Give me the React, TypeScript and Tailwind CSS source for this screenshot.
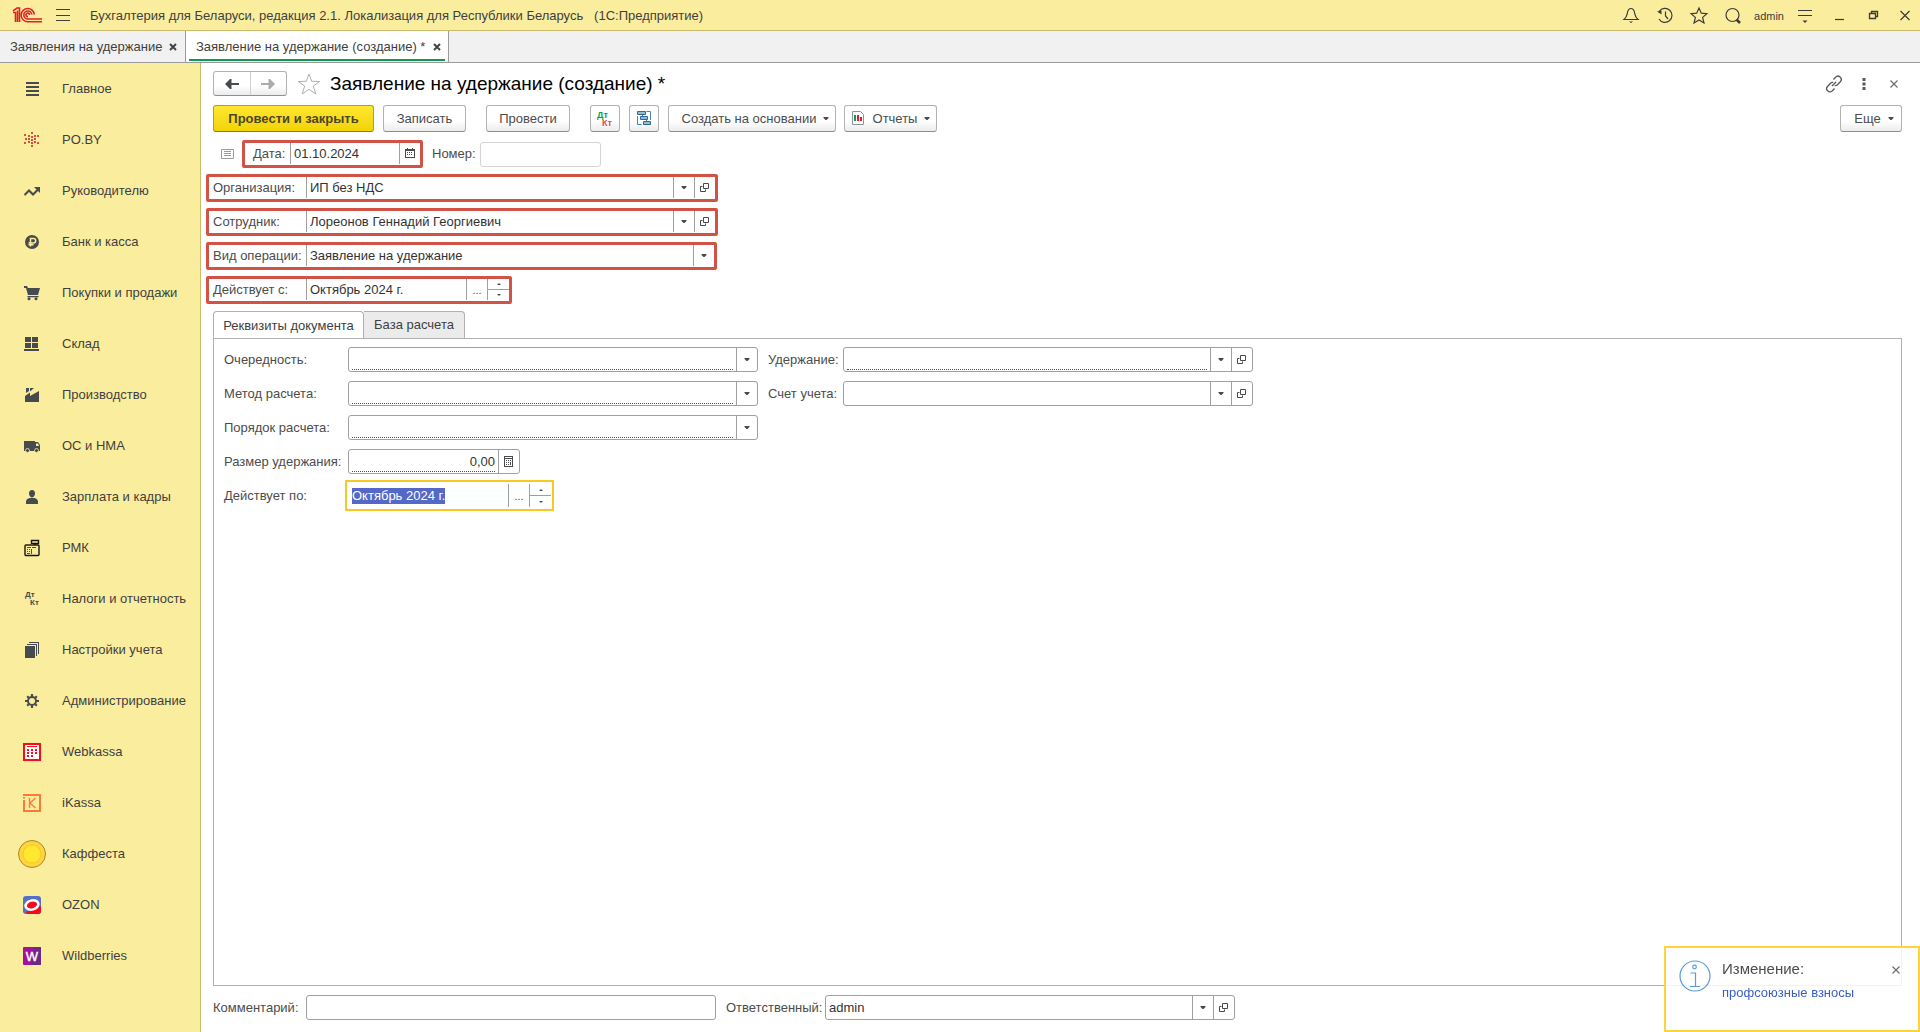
import { useEffect, useRef, type ReactNode } from 'react'
import { clsx } from 'clsx'

export default function App() {
  return (
    <div className="flex min-h-screen flex-col bg-white font-['Liberation_Sans',Arial,sans-serif] text-[13px] leading-4 text-[#3f3f3f]">
      <TitleBar />
      <WindowTabs />
      <div className="flex flex-1">
        <Sidebar />
        <DocumentForm />
      </div>
      <Notification />
    </div>
  )
}

function TitleBar() {
  return (
    <header className="flex h-[31px] items-center border-b border-[#c9bb6b] bg-[#fbed9e] pl-3">
      <Logo />
      <button aria-label="Меню" className="ml-3">
        <svg width="16" height="14" viewBox="0 0 16 14" stroke="#3f3f3f" fill="none">
          <path d="M1 1.5h14M1 7.5h14M1 12.5h14" />
        </svg>
      </button>
      <h1 className="ml-[19px] pt-px whitespace-pre">
        Бухгалтерия для Беларуси, редакция 2.1. Локализация для Республики Беларусь{'   '}(1С:Предприятие)
      </h1>
      <div className="ml-auto flex items-center text-[#3b3b3b]">
        <TitleButton label="Уведомления">
          <path d="M4 14.5h14c-3-2.500-3-4.500-3.500-7C14 4.500 12.500 3.500 11 3.500S8 4.500 7.500 7.500c-.5 2.500-.5 4.500-3.500 7z" />
          <path d="M9 16.500h4l-2 1.500z" fill="currentColor" stroke="none" />
        </TitleButton>
        <TitleButton label="История">
          <path d="M5.200 6.500A7 7 0 1 1 5 14M11.500 6.500V11l2.500 3" />
          <path d="M3 6.500l4.500-1v4z" fill="currentColor" stroke="none" />
        </TitleButton>
        <TitleButton label="Избранное">
          <path d="M11 3l2.300 5.200 5.600.5-4.300 3.700 1.400 5.600-5-3-5 3 1.400-5.600-4.300-3.700 5.600-.5z" />
        </TitleButton>
        <TitleButton label="Поиск">
          <circle cx="10.500" cy="10" r="6.500" />
          <path d="M14.500 14.500l3.500 3.500" strokeWidth="2.500" />
        </TitleButton>
        <button className="mx-1 pt-px text-[11px]">admin</button>
        <TitleButton label="Сервис">
          <path d="M4 5.500h14M4 10.500h14" />
          <path d="M8.500 15.500h5L11 18z" fill="currentColor" stroke="none" />
        </TitleButton>
        <TitleButton label="Свернуть">
          <path d="M7 14.500h9" />
        </TitleButton>
        <TitleButton label="Восстановить">
          <path d="M7.500 8.500h6v5h-6zM9.500 8V6.500h6v5H14" strokeWidth="1.300" />
        </TitleButton>
        <TitleButton label="Закрыть" className="w-[30px]">
          <path d="M6.500 6l9 9M15.500 6l-9 9" />
        </TitleButton>
      </div>
    </header>
  )
}

interface TitleButtonProps {
  label: string
  className?: string
  children: ReactNode
}

function TitleButton({ label, className = 'w-[34px]', children }: TitleButtonProps) {
  return (
    <button aria-label={label} className={clsx('flex justify-center', className)}>
      <svg width="22" height="20" viewBox="0 0 22 20" fill="none" stroke="currentColor" strokeWidth="1.200">
        {children}
      </svg>
    </button>
  )
}

function Logo() {
  return (
    <svg width="31" height="16" viewBox="0 0 31 16" fill="none" stroke="#e31e24" strokeWidth="1.600" aria-label="1С">
      <path d="M1 5.500h2.500V15M1 3.800L5 1h2.500v14M5.500 3.500V15" />
      <path d="M22.300 7.500A6.600 6.600 0 1 0 16 14.700h14M19.800 7.500A4 4 0 1 0 16 12h14" />
      <path d="M17.500 8A1.800 1.800 0 1 0 16 9.600" />
    </svg>
  )
}

function WindowTabs() {
  return (
    <nav className="flex h-8 border-b border-[#9b9b9b] bg-[#f1f1f1]">
      <div className="flex w-[185px] items-center justify-between pr-2 pl-[10px]">
        <a href="#list">Заявления на удержание</a>
        <TabClose />
      </div>
      <div className="flex w-[264px] flex-col border-x border-[#9b9b9b] bg-white px-[3px] pb-px">
        <div className="flex flex-1 items-center justify-between pt-1 pr-1 pl-[7px]">
          <a href="#create">Заявление на удержание (создание) *</a>
          <TabClose />
        </div>
        <div className="h-[2px] bg-[#0f9b4e]" />
      </div>
    </nav>
  )
}

function TabClose() {
  return (
    <button aria-label="Закрыть вкладку">
      <svg width="8" height="8" viewBox="0 0 8 8" stroke="#3f4548" strokeWidth="2">
        <path d="M1 1l6 6M7 1L1 7" />
      </svg>
    </button>
  )
}

const sections: { title: string; icon: ReactNode }[] = [
  { title: 'Главное', icon: <path d="M4 3h13v2H4zM4 7h13v2H4zM4 11h13v2H4zM4 15h13v2H4z" /> },
  {
    title: 'PO.BY',
    icon: (
      <path
        fill="#d9503f"
        d="M9 2h2v2H9zM9 6h2v2H9zM9 9h2v2H9zM9 12h2v2H9zM9 15h2v2H9zM6 5h2v2H6zM12 5h2v2h-2zM6 8h2v2H6zM12 8h2v2h-2zM6 11h2v2H6zM12 11h2v2h-2zM2 4h2v2H2zM15 5h2v2h-2zM3 8h2v2H3zM2 12h2v2H2zM15 12h2v2h-2z"
      />
    ),
  },
  { title: 'Руководителю', icon: <path d="M2 13l5-5 4 4 3.500-3.500L12 6h6v6l-2-2-5 5-4-4-4 4z" /> },
  {
    title: 'Банк и касса',
    icon: (
      <>
        <circle cx="10" cy="10" r="7" />
        <path d="M8.500 14.500v-8h3a2.200 2.200 0 0 1 0 4.400H6.500M6.500 12.800h5" fill="none" stroke="#fbed9e" strokeWidth="1.500" />
      </>
    ),
  },
  {
    title: 'Покупки и продажи',
    icon: (
      <>
        <path d="M2 3h3l1 2h12l-2 7H6L4 5H2zM5.500 13h11v1.200h-11z" />
        <circle cx="7" cy="15.800" r="1.500" />
        <circle cx="14" cy="15.800" r="1.500" />
      </>
    ),
  },
  { title: 'Склад', icon: <path d="M3 3h6v5H3zM10 3h6v5h-6zM3 9h6v5H3zM10 9h6v5h-6zM2 15h15v2H2z" /> },
  { title: 'Производство', icon: <path d="M3 17v-6l5-3.500V11l9-5v11zM4 3h3v3L4 8zM8 3h4L8 6.500z" /> },
  {
    title: 'ОС и НМА',
    icon: (
      <>
        <path d="M2 5h11v10H2zM12.500 6h3.500l2 3v6h-5.500z" />
        <path d="M14 7.500h2l1 2.500h-3z" fill="#fbed9e" />
        <circle cx="5.500" cy="14.500" r="2" stroke="#fbed9e" strokeWidth=".8" />
        <circle cx="14.500" cy="14.500" r="2" stroke="#fbed9e" strokeWidth=".8" />
      </>
    ),
  },
  { title: 'Зарплата и кадры', icon: <path d="M10 3c2 0 3 1.400 3 3.500S11.500 10.500 10 10.500 7 8.600 7 6.500 8 3 10 3zM4 17v-2.500c0-2 2.500-3.500 4-3.500h4c1.500 0 4 1.500 4 3.500V17z" /> },
  {
    title: 'РМК',
    icon: (
      <>
        <rect x="3" y="7" width="14" height="10.500" rx="1" fill="none" stroke="#1a1410" strokeWidth="1.400" />
        <path d="M9.500 2.500h7v3h-7zM13 5.500V7" fill="none" stroke="#1a1410" strokeWidth="1.400" />
        <path d="M4 6h7v2H4zM5 9h4v1H5zM5 11h1v1H5zM7 11h1v1H7zM5 13h1v1H5zM7 13h1v1H7zM10 9h4v1h-4zM5 15h3v1H5zM9 11h1v5H9z" fill="#5b4f35" />
      </>
    ),
  },
  {
    title: 'Налоги и отчетность',
    icon: (
      <g fontSize="8" fontWeight="bold">
        <text x="3" y="8">Дт</text>
        <text x="8" y="16">Кт</text>
      </g>
    ),
  },
  { title: 'Настройки учета', icon: <path d="M3 6h10v12H3zM5 4h10v12h-1V5H5zM7 2h10v12h-1V3H7z" /> },
  {
    title: 'Администрирование',
    icon: (
      <g fill="none" stroke="#484b4d">
        <circle cx="10" cy="10" r="4" strokeWidth="2" />
        <path strokeWidth="2.200" d="M10 3v2.500M10 14.500V17M3 10h2.500M14.500 10H17M5.200 5.200l1.500 1.500M13.300 13.300l1.500 1.500M5.200 14.800l1.500-1.500M13.300 6.700l1.500-1.500" />
      </g>
    ),
  },
  {
    title: 'Webkassa',
    icon: (
      <>
        <rect x="2" y="2" width="16" height="16" fill="#fff" stroke="#fb0d1b" strokeWidth="2" />
        <path d="M5 4h10v1H5zM5 7h2v2H5zM9 7h2v2H9zM13 7h2v2h-2zM5 10h2v2H5zM9 10h2v2H9zM13 10h2v2h-2zM5 13h2v2H5zM9 13h2v2H9z" fill="#fb0d1b" />
      </>
    ),
  },
  {
    title: 'iKassa',
    icon: (
      <g fill="none" stroke="#f97b3c">
        <path strokeWidth="2" d="M1 2h17v16H2V7M2 5.500V4" />
        <path strokeWidth="1.400" d="M7.500 5v10M13.500 5L8 10l5.500 5" />
      </g>
    ),
  },
  {
    title: 'Каффеста',
    icon: (
      <>
        <circle cx="10" cy="10" r="13.500" fill="#fed443" stroke="#a98a1c" />
        <circle cx="10" cy="10" r="9" fill="#ffe930" stroke="#fbc91d" />
      </>
    ),
  },
  {
    title: 'OZON',
    icon: (
      <>
        <rect x="1" y="1" width="18" height="18" rx="3" fill="#5570cb" />
        <path d="M4 17l15-6v5a3 3 0 0 1-3 3H5z" fill="#f5091f" />
        <ellipse cx="10" cy="10" rx="6.500" ry="4.500" fill="#f5091f" stroke="#fff" strokeWidth="2.500" transform="rotate(-15 10 10)" />
      </>
    ),
  },
  {
    title: 'Wildberries',
    icon: (
      <>
        <rect x="1" y="1" width="18" height="18" rx="1" fill="#a3109c" />
        <path d="M13 1h5a1 1 0 0 1 1 1v16a1 1 0 0 1-1 1h-9z" fill="#6a2a86" />
        <text x="10" y="14.500" fontSize="13" textAnchor="middle" fill="#fff" stroke="#fff" strokeWidth=".4">W</text>
      </>
    ),
  },
]

function Sidebar() {
  return (
    <nav className="w-[201px] shrink-0 border-r border-[#c9bb6b] bg-[#fbed9e]">
      {sections.map(({ title, icon }) => (
        <a key={title} href="#section" className="flex h-[51px] items-center pt-px pl-[22px]">
          <svg width="20" height="20" viewBox="0 0 20 20" fill="#484b4d" className="overflow-visible">
            {icon}
          </svg>
          <span className="ml-5 whitespace-nowrap">{title}</span>
        </a>
      ))}
    </nav>
  )
}

function DocumentForm() {
  return (
    <main className="flex min-w-0 flex-1 flex-col pt-2 pr-[18px] pb-3 pl-3 text-[#4c4c4c]">
      <FormHeader />
      <Toolbar />
      <HeaderFields />
      <div className="mt-[7px] flex text-[#3f3f3f]" role="tablist">
        <button role="tab" aria-selected="true" className="-mb-px h-7 w-[151px] rounded-t-sm border border-b-0 border-[#b0b0b0] bg-white whitespace-nowrap">
          Реквизиты документа
        </button>
        <button role="tab" aria-selected="false" className="h-[27px] w-[101px] rounded-tr-sm border border-b-0 border-l-0 border-[#b0b0b0] bg-[#ebebeb] whitespace-nowrap">
          База расчета
        </button>
      </div>
      <DetailsPanel />
      <div className="mt-[9px] flex items-center">
        <label htmlFor="comment" className="w-[93px]">Комментарий:</label>
        <Field className="w-[410px]">
          <TextInput id="comment" />
        </Field>
        <label htmlFor="responsible" className="ml-[10px] w-[99px]">Ответственный:</label>
        <Field className="w-[410px]">
          <TextInput id="responsible" value="admin" />
          <DropButton />
          <OpenButton />
        </Field>
      </div>
    </main>
  )
}

function FormHeader() {
  return (
    <div className="flex h-[25px] items-center">
      <div className="flex h-[25px] w-[74px] rounded-[3px] border border-[#b3b3b3] border-b-[#8f8f8f] bg-linear-to-b from-white from-60% to-[#ececec]">
        <button aria-label="Назад" className="flex flex-1 items-center justify-center border-r border-[#cfcfcf]">
          <ArrowIcon className="text-[#484b4d]" />
        </button>
        <button aria-label="Вперед" className="flex flex-1 items-center justify-center">
          <ArrowIcon className="rotate-180 text-[#ababab]" />
        </button>
      </div>
      <button aria-label="В избранное" className="ml-[10px]">
        <svg width="24" height="24" viewBox="0 0 24 24" fill="none" stroke="#b0b0b0">
          <path d="M12 2l2.700 7.300 8 .2-6.400 4.600L18.800 22 12 17.300 5.200 22l2.500-7.900L1.300 9.500l8-.2z" />
        </svg>
      </button>
      <h2 className="ml-[9px] text-[19px] leading-6 text-black">Заявление на удержание (создание) *</h2>
      <div className="-mr-[7px] ml-auto flex items-center text-[#55595c]">
        <button aria-label="Ссылка" className="w-[30px]">
          <svg width="18" height="18" viewBox="0 0 18 18" fill="none" stroke="currentColor" strokeWidth="1.300" className="mx-auto">
            <path d="M8.500 4.500l2-2.200a3.200 3.200 0 0 1 5 4.200l-3 3.300c-.8.8-1.800 1-2.800.8M9.500 13.500l-2 2.200a3.200 3.200 0 0 1-5-4.200l3-3.300c.8-.8 1.800-1 2.800-.8M7 11l4-4" />
          </svg>
        </button>
        <button aria-label="Дополнительно" className="w-[30px]">
          <svg width="4" height="12" viewBox="0 0 4 12" fill="currentColor" className="mx-auto">
            <path d="M.5 0h3v3h-3zM.5 4.500h3v3h-3zM.5 9h3v3h-3z" />
          </svg>
        </button>
        <button aria-label="Закрыть" className="w-[30px]">
          <CloseIcon />
        </button>
      </div>
    </div>
  )
}

function ArrowIcon({ className }: { className: string }) {
  return (
    <svg width="14" height="10" viewBox="0 0 14 10" fill="currentColor" className={className}>
      <path d="M0 5l5-5h1.500v4H14v2H6.500v4H5z" />
    </svg>
  )
}

function CloseIcon() {
  return (
    <svg width="8" height="8" viewBox="0 0 8 8" stroke="#6b6f72" strokeWidth="1.200" className="mx-auto">
      <path d="M.5.5l7 7M7.500.5l-7 7" />
    </svg>
  )
}

function Toolbar() {
  return (
    <div className="mt-[9px] flex h-[27px]">
      <button className="w-[161px] rounded-[3px] border border-[#b5a116] border-b-[#8a7a10] bg-linear-to-b from-[#ffe62e] to-[#f2d400] font-bold text-[#4c4628]">
        Провести и закрыть
      </button>
      <ToolButton className="ml-[9px] w-[83px]">Записать</ToolButton>
      <ToolButton className="ml-5 w-[84px]">Провести</ToolButton>
      <ToolButton className="ml-5 w-[30px]" label="Движения документа">
        <svg width="18" height="17" viewBox="0 0 18 17" fontSize="9" fontWeight="bold">
          <text x="1" y="8" fill="#0f9b4e">Дт</text>
          <text x="6" y="16" fill="#d9503f">Кт</text>
        </svg>
      </ToolButton>
      <ToolButton className="ml-[9px] w-[30px]" label="Структура подчиненности">
        <svg width="14" height="15" viewBox="0 0 14 15" fill="#9db9cc" stroke="#2c6a98">
          <path d="M.5.5h8v3h-8zM3.500 5.500h7v3h-7zM6.500 10.500h7v3h-7z" />
          <path d="M9.500.5h4V9M.5 5v8.500h4M5.500 4v1M9.500 9v1" fill="none" stroke="#3f87c4" />
        </svg>
      </ToolButton>
      <ToolButton className="ml-[9px] w-[168px]">
        <span className="ml-[7px]">Создать на основании</span>
        <Caret className="ml-[7px]" />
      </ToolButton>
      <ToolButton className="ml-2 w-[93px]">
        <svg width="14" height="15" viewBox="0 0 14 15">
          <path d="M1.500.5h8l3 3v10h-11z" fill="#fff" stroke="#8d9498" />
          <path d="M3 4h2v6H3z" fill="#0f9b4e" />
          <path d="M6 4h2v6H6zM9 6h2v4H9z" fill="#e31e24" />
        </svg>
        <span className="ml-2">Отчеты</span>
        <Caret className="ml-[7px]" />
      </ToolButton>
      <ToolButton className="ml-auto w-[62px]">
        <span className="ml-[6px]">Еще</span>
        <Caret className="ml-[7px]" />
      </ToolButton>
    </div>
  )
}

interface ToolButtonProps {
  className?: string
  label?: string
  children: ReactNode
}

function ToolButton({ className, label, children }: ToolButtonProps) {
  return (
    <button
      aria-label={label}
      className={clsx(
        'flex items-center justify-center rounded-[3px] border border-[#b3b3b3] border-b-[#8f8f8f] bg-linear-to-b from-white from-60% to-[#ececec] whitespace-nowrap',
        className,
      )}
    >
      {children}
    </button>
  )
}

function Caret({ className }: { className?: string }) {
  return (
    <svg width="6" height="3" viewBox="0 0 6 3" fill="#484b4d" className={className}>
      <path d="M.5 0h5v1L3.500 3h-1L.5 1z" />
    </svg>
  )
}

function HeaderFields() {
  return (
    <div className="mt-2 flex flex-col items-start gap-[6px]">
      <div className="flex items-center">
        <svg width="13" height="10" viewBox="0 0 13 10" fill="none" stroke="#9b9b9b" className="mx-2">
          <path d="M.5.5h12v9H.5zM3 2.500h7M3 4.500h7M3 6.500h7" />
        </svg>
        <Frame className="w-[181px]">
          <label htmlFor="date" className="w-[45px] pl-2">Дата:</label>
          <FrameInput id="date" value="01.10.2024" />
          <SideButton label="Выбрать дату">
            <svg width="10" height="11" viewBox="0 0 10 11" fill="#484b4d">
              <path d="M0 1h2V0h1v1h4V0h1v1h2v9H0zM1 3v6h8V3z" fillRule="evenodd" />
              <path d="M2 4h1v1H2zM4 4h1v1H4zM6 4h1v1H6zM2 6h1v1H2zM4 6h1v1H4zM6 6h1v1H6z" />
            </svg>
          </SideButton>
        </Frame>
        <label htmlFor="number" className="ml-[9px] w-12">Номер:</label>
        <Field className="w-[121px]" readOnly>
          <TextInput id="number" />
        </Field>
      </div>
      <Frame className="-ml-[7px] w-[512px]">
        <FrameLabel htmlFor="org">Организация:</FrameLabel>
        <FrameInput id="org" value="ИП без НДС" />
        <DropButton />
        <OpenButton />
      </Frame>
      <Frame className="-ml-[7px] w-[512px]">
        <FrameLabel htmlFor="employee">Сотрудник:</FrameLabel>
        <FrameInput id="employee" value="Лореонов Геннадий Георгиевич" />
        <DropButton />
        <OpenButton />
      </Frame>
      <Frame className="-ml-[7px] w-[511px]">
        <FrameLabel htmlFor="operation">Вид операции:</FrameLabel>
        <select id="operation" className="min-w-0 flex-1 appearance-none self-stretch border-l border-[#a0a0a0] pl-[3px] text-[#333] outline-none">
          <option>Заявление на удержание</option>
        </select>
        <DropButton />
      </Frame>
      <Frame className="-ml-[7px] w-[306px]">
        <FrameLabel htmlFor="from">Действует с:</FrameLabel>
        <FrameInput id="from" value="Октябрь 2024 г." />
        <SideButton label="Выбрать период">
          <Ellipsis />
        </SideButton>
        <Spinner />
      </Frame>
    </div>
  )
}

function Frame({ className, children }: { className?: string; children: ReactNode }) {
  return (
    <div className={clsx('flex h-7 items-center rounded-[2px] border-3 border-[#d35246] pb-px', className)}>{children}</div>
  )
}

function FrameLabel({ htmlFor, children }: { htmlFor: string; children: ReactNode }) {
  return (
    <label htmlFor={htmlFor} className="w-[97px] pl-1 whitespace-nowrap">
      {children}
    </label>
  )
}

function FrameInput({ id, value }: { id: string; value: string }) {
  return (
    <input
      id={id}
      defaultValue={value}
      className="min-w-0 flex-1 self-stretch border-l border-[#a0a0a0] pl-[3px] text-[#333] outline-none"
    />
  )
}

interface FieldProps {
  className?: string
  readOnly?: boolean
  children: ReactNode
}

function Field({ className, readOnly, children }: FieldProps) {
  return (
    <div
      className={clsx(
        'flex h-[25px] items-center rounded-[3px] border',
        readOnly ? 'border-[#d4d4d4]' : 'border-[#a0a0a0]',
        className,
      )}
    >
      {children}
    </div>
  )
}

interface TextInputProps {
  id: string
  value?: string
  required?: boolean
  alignRight?: boolean
}

function TextInput({ id, value, required, alignRight }: TextInputProps) {
  return (
    <input
      id={id}
      defaultValue={value}
      className={clsx(
        'mx-[3px] h-5 min-w-0 flex-1 text-[#333] outline-none',
        required && 'border-b border-dotted border-[#f5091f]',
        alignRight && 'text-right',
      )}
    />
  )
}

function SideButton({ label, children }: { label: string; children: ReactNode }) {
  return (
    <button
      aria-label={label}
      className="flex w-[21px] shrink-0 items-center justify-center self-stretch border-l border-[#a0a0a0]"
    >
      {children}
    </button>
  )
}

function DropButton() {
  return (
    <SideButton label="Выбрать из списка">
      <Caret />
    </SideButton>
  )
}

function OpenButton() {
  return (
    <SideButton label="Открыть">
      <svg width="10" height="9" viewBox="0 0 10 9" fill="none" stroke="#484b4d">
        <path d="M3.500.5h5v5h-5zM2.500 3.500h-2v5h5v-2" />
      </svg>
    </SideButton>
  )
}

function Ellipsis() {
  return <span className="text-[11px]">...</span>
}

function Spinner() {
  return (
    <div className="flex w-[22px] shrink-0 flex-col self-stretch border-l border-[#a0a0a0]">
      <button aria-label="Увеличить" className="flex flex-1 items-center justify-center border-b border-[#a0a0a0]">
        <svg width="4" height="2" viewBox="0 0 4 2" fill="#484b4d">
          <path d="M0 2h4L2 0z" />
        </svg>
      </button>
      <button aria-label="Уменьшить" className="flex flex-1 items-center justify-center">
        <svg width="4" height="2" viewBox="0 0 4 2" fill="#484b4d">
          <path d="M0 0h4L2 2z" />
        </svg>
      </button>
    </div>
  )
}

function DetailsPanel() {
  return (
    <section className="flex flex-1 flex-col gap-[9px] border border-[#b0b0b0] px-[10px] pt-2">
      <div className="flex items-center">
        <PanelLabel htmlFor="priority">Очередность:</PanelLabel>
        <RequiredSelect id="priority" />
        <label htmlFor="deduction" className="ml-[10px] w-[75px]">Удержание:</label>
        <Field className="w-[410px]">
          <TextInput id="deduction" required />
          <DropButton />
          <OpenButton />
        </Field>
      </div>
      <div className="flex items-center">
        <PanelLabel htmlFor="method">Метод расчета:</PanelLabel>
        <RequiredSelect id="method" />
        <label htmlFor="account" className="ml-[10px] w-[75px]">Счет учета:</label>
        <Field className="w-[410px]">
          <TextInput id="account" />
          <DropButton />
          <OpenButton />
        </Field>
      </div>
      <div className="flex items-center">
        <PanelLabel htmlFor="order">Порядок расчета:</PanelLabel>
        <RequiredSelect id="order" />
      </div>
      <div className="flex items-center">
        <PanelLabel htmlFor="amount">Размер удержания:</PanelLabel>
        <Field className="w-[172px]">
          <TextInput id="amount" value="0,00" required alignRight />
          <SideButton label="Калькулятор">
            <svg width="10" height="11" viewBox="0 0 10 11" fill="#484b4d">
              <path d="M0 0h9v11H0zM1 1v1h7V1zM1 3v7h7V3z" fillRule="evenodd" />
              <path d="M2 4h1v1H2zM4 4h1v1H4zM6 4h1v1H6zM2 6h1v1H2zM4 6h1v1H4zM6 6h1v3H6zM2 8h1v1H2zM4 8h1v1H4z" />
            </svg>
          </SideButton>
        </Field>
      </div>
      <div className="flex h-[25px] items-center">
        <PanelLabel htmlFor="until">Действует по:</PanelLabel>
        <UntilField />
      </div>
    </section>
  )
}

function PanelLabel({ htmlFor, children }: { htmlFor: string; children: ReactNode }) {
  return (
    <label htmlFor={htmlFor} className="w-[124px] whitespace-nowrap">
      {children}
    </label>
  )
}

function RequiredSelect({ id }: { id: string }) {
  return (
    <Field className="w-[410px]">
      <select id={id} className="mx-[3px] h-5 min-w-0 flex-1 appearance-none border-b border-dotted border-[#f5091f] outline-none" />
      <DropButton />
    </Field>
  )
}

function UntilField() {
  const ref = useRef<HTMLInputElement>(null)

  useEffect(() => {
    ref.current?.focus()
    ref.current?.select()
  }, [])

  return (
    <div className="-ml-[3px] flex h-[31px] w-[209px] shrink-0 items-center border-2 border-[#f9c824] py-[2px] pr-px pl-[2px]">
      <input
        ref={ref}
        id="until"
        defaultValue="Октябрь 2024 г."
        className="min-w-0 flex-1 pl-[3px] outline-none selection:bg-[#5468c8] selection:text-white"
      />
      <SideButton label="Выбрать период">
        <Ellipsis />
      </SideButton>
      <Spinner />
    </div>
  )
}

function Notification() {
  return (
    <aside className="fixed right-0 bottom-0 flex h-[86px] w-[256px] items-start border-2 border-[#fdd33f] bg-white/85 pt-3 pr-[18px] pl-[13px]">
      <svg width="32" height="32" viewBox="0 0 32 32" fill="none" stroke="#5a9bd8" strokeWidth="1.200">
        <circle cx="16" cy="16" r="15" />
        <circle cx="15.500" cy="7" r="1.800" />
        <path d="M11.500 13h5v13M11 26.500h10" />
      </svg>
      <div className="ml-[11px]">
        <h3 className="text-[15px] leading-[18px] text-[#4c4c4c]">Изменение:</h3>
        <a href="#change" className="mt-[7px] block text-[#3a5fc4]">профсоюзные взносы</a>
      </div>
      <button aria-label="Закрыть уведомление" className="mt-[6px] ml-auto flex">
        <CloseIcon />
      </button>
    </aside>
  )
}
